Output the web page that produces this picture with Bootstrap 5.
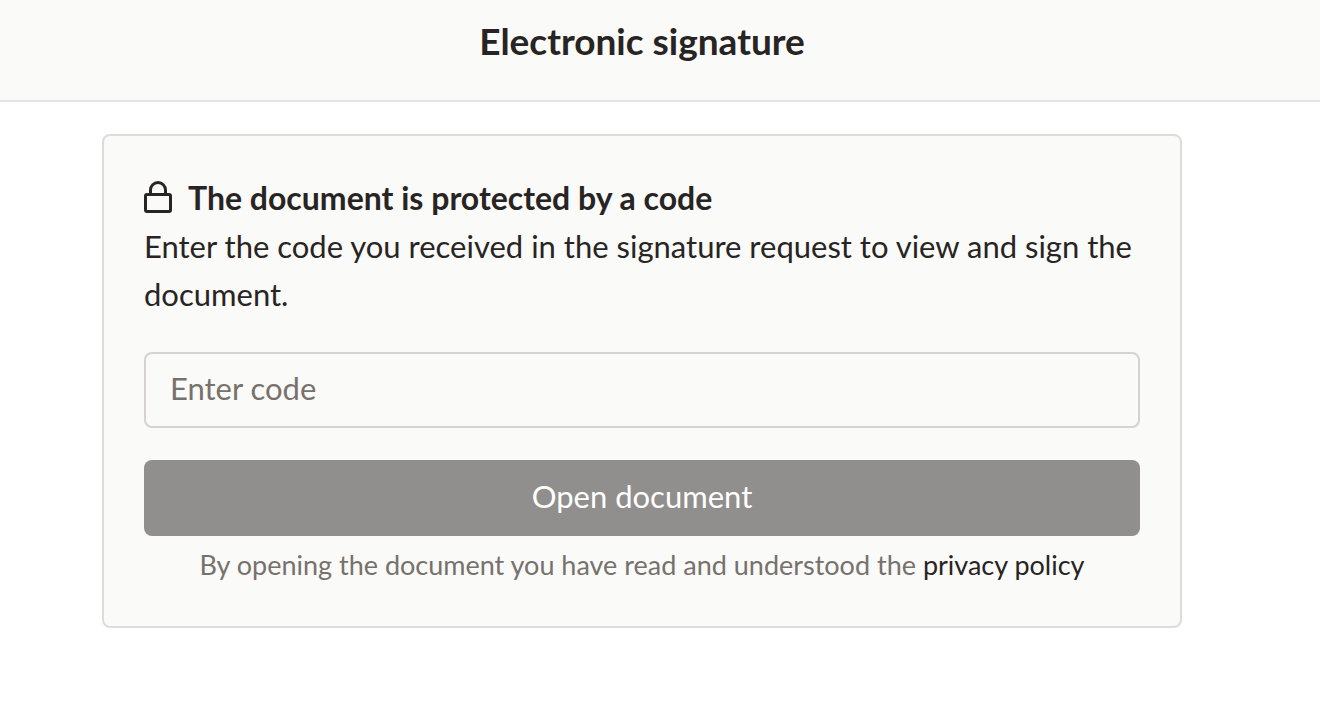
<!DOCTYPE html>
<html lang="en">
<head>
<meta charset="utf-8">
<meta name="viewport" content="width=device-width, initial-scale=1">
<title>Electronic signature</title>
<link href="https://cdn.jsdelivr.net/npm/bootstrap@5.3.0/dist/css/bootstrap.min.css" rel="stylesheet">
<style>
body{font-family:Lato,"Liberation Sans",sans-serif;color:#282423;background:#fff;font-size:31px;line-height:48px}
.page-column{width:100%;max-width:1284px;padding:0 102px}
.page-header{background:#fafaf8;border-bottom:2px solid #e4e4e3;padding:14px 0 32px}
.page-title{font-size:37px;line-height:54px;font-weight:700;margin:0}
.code-panel{background:#fafaf8;border:2px solid #dcdcdb;border-radius:8px;padding:38px 40px 40px}
.panel-title{font-size:32px;line-height:48px;font-weight:700;margin:0}
.code-input{height:76px;border:2px solid #d6d2d1;border-radius:8px;background:#fafaf8;font-size:31px;padding:0 24px 4px;margin:34px 0 32px}
.code-input::placeholder{color:#77716d}
.open-btn{height:76px;border:0;border-radius:8px;background:#908f8d;color:#fff;font-size:31px;padding:0 24px 4px}
.open-btn:hover{background:#807f7d;color:#fff}
.policy-note{font-size:27px;line-height:42px;color:#77716d}
.policy-note a{color:#282423;text-decoration:none}
</style>
</head>
<body>
<header class="page-header"><div class="page-column text-center"><h1 class="page-title">Electronic signature</h1></div></header>
<main class="page-column mt-4 pt-2">
<form class="code-panel">
<div class="d-flex align-items-center gap-3">
<svg class="flex-shrink-0" width="28" height="34" viewBox="0 0 28 34" fill="none" stroke="#282423" stroke-width="3" aria-hidden="true"><rect x="1.5" y="13.5" width="25" height="17" rx="1.5"/><path d="M6.5 13V9a7.5 7.5 0 0 1 15 0v4"/></svg>
<h2 class="panel-title">The document is protected by a code</h2>
</div>
<p class="mb-0"><label for="code">Enter the code you received in the signature request to view and sign the document.</label></p>
<input id="code" type="text" class="form-control code-input" placeholder="Enter code">
<button type="button" class="btn open-btn w-100">Open document</button>
<p class="policy-note text-center mt-2 mb-0">By opening the document you have read and understood the <a href="#">privacy policy</a></p>
</form>
</main>
<script src="https://cdn.jsdelivr.net/npm/bootstrap@5.3.0/dist/js/bootstrap.bundle.min.js"></script>
</body>
</html>
